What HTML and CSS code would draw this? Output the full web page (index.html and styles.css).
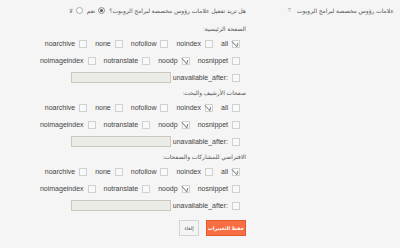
FILE: index.html
```html
<!DOCTYPE html>
<html lang="ar" dir="rtl">
<head>
    <meta charset="UTF-8">
    <title>علامات رؤوس مخصصة لبرامج الروبوت</title>
    <link rel="stylesheet" href="styles.css">
</head>
<body>
    <div class="settings">
        <div class="field-label">
            <span>علامات رؤوس مخصصة لبرامج الروبوت</span>
            <span class="help">?</span>
        </div>
        <div class="field-body">
            <div class="question">
                هل تريد تفعيل علامات رؤوس مخصصة لبرامج الروبوت؟
                <span class="radio on"></span> نعم
                <span class="radio"></span> لا
            </div>

            <div class="group">
                <div class="group-title">الصفحة الرئيسية:</div>
                <div class="row">
                    <label class="opt"><span class="box checked"><svg viewBox="0 0 10 10"><path d="M1 1.5 L6.5 7.5 L7.5 3.5"/></svg></span><span class="tag">all</span></label>
                    <label class="opt"><span class="box"></span><span class="tag">noindex</span></label>
                    <label class="opt"><span class="box"></span><span class="tag">nofollow</span></label>
                    <label class="opt"><span class="box"></span><span class="tag">none</span></label>
                    <label class="opt"><span class="box"></span><span class="tag">noarchive</span></label>
                </div>
                <div class="row">
                    <label class="opt"><span class="box"></span><span class="tag">nosnippet</span></label>
                    <label class="opt"><span class="box checked"><svg viewBox="0 0 10 10"><path d="M1 1.5 L6.5 7.5 L7.5 3.5"/></svg></span><span class="tag">noodp</span></label>
                    <label class="opt"><span class="box"></span><span class="tag">notranslate</span></label>
                    <label class="opt"><span class="box"></span><span class="tag">noimageindex</span></label>
                </div>
                <div class="row">
                    <label class="opt"><span class="box"></span><span class="tag">unavailable_after:</span></label>
                    <input type="text" class="date">
                </div>
            </div>

            <div class="group">
                <div class="group-title">صفحات الأرشيف والبحث:</div>
                <div class="row">
                    <label class="opt"><span class="box"></span><span class="tag">all</span></label>
                    <label class="opt"><span class="box checked"><svg viewBox="0 0 10 10"><path d="M1 1.5 L6.5 7.5 L7.5 3.5"/></svg></span><span class="tag">noindex</span></label>
                    <label class="opt"><span class="box"></span><span class="tag">nofollow</span></label>
                    <label class="opt"><span class="box"></span><span class="tag">none</span></label>
                    <label class="opt"><span class="box"></span><span class="tag">noarchive</span></label>
                </div>
                <div class="row">
                    <label class="opt"><span class="box"></span><span class="tag">nosnippet</span></label>
                    <label class="opt"><span class="box checked"><svg viewBox="0 0 10 10"><path d="M1 1.5 L6.5 7.5 L7.5 3.5"/></svg></span><span class="tag">noodp</span></label>
                    <label class="opt"><span class="box"></span><span class="tag">notranslate</span></label>
                    <label class="opt"><span class="box"></span><span class="tag">noimageindex</span></label>
                </div>
                <div class="row">
                    <label class="opt"><span class="box"></span><span class="tag">unavailable_after:</span></label>
                    <input type="text" class="date">
                </div>
            </div>

            <div class="group">
                <div class="group-title">الافتراضي للمشاركات والصفحات:</div>
                <div class="row">
                    <label class="opt"><span class="box checked"><svg viewBox="0 0 10 10"><path d="M1 1.5 L6.5 7.5 L7.5 3.5"/></svg></span><span class="tag">all</span></label>
                    <label class="opt"><span class="box"></span><span class="tag">noindex</span></label>
                    <label class="opt"><span class="box"></span><span class="tag">nofollow</span></label>
                    <label class="opt"><span class="box"></span><span class="tag">none</span></label>
                    <label class="opt"><span class="box"></span><span class="tag">noarchive</span></label>
                </div>
                <div class="row">
                    <label class="opt"><span class="box"></span><span class="tag">nosnippet</span></label>
                    <label class="opt"><span class="box checked"><svg viewBox="0 0 10 10"><path d="M1 1.5 L6.5 7.5 L7.5 3.5"/></svg></span><span class="tag">noodp</span></label>
                    <label class="opt"><span class="box"></span><span class="tag">notranslate</span></label>
                    <label class="opt"><span class="box"></span><span class="tag">noimageindex</span></label>
                </div>
                <div class="row">
                    <label class="opt"><span class="box"></span><span class="tag">unavailable_after:</span></label>
                    <input type="text" class="date">
                </div>
            </div>

            <div class="actions">
                <button class="save">حفظ التغييرات</button>
                <button class="cancel">إلغاء</button>
            </div>
        </div>
    </div>
</body>
</html>
```

FILE: styles.css
```css
* {
    margin: 0;
    padding: 0;
    box-sizing: border-box;
}

body {
    background: #f5f5f5;
    font-family: "Liberation Sans", "DejaVu Sans", sans-serif;
    font-size: 7px;
    color: #444;
}

.settings {
    display: flex;
    align-items: flex-start;
    padding-top: 3px;
}

.field-label {
    width: 150px;
    padding-right: 6px;
    display: flex;
    gap: 6px;
    height: 14px;
    align-items: center;
    color: #555;
    font-size: 6px;
}

.help {
    color: #999;
}

.field-body {
    width: 200px;
    padding-right: 4px;
}

.question {
    height: 14px;
    display: flex;
    align-items: center;
    gap: 3px;
    color: #555;
    font-size: 6px;
    margin-bottom: 6px;
}

.radio {
    width: 7px;
    height: 7px;
    border-radius: 50%;
    border: 1px solid #aaa;
    background: #fff;
    margin-right: 1px;
}

.radio.on {
    background: #555;
    box-shadow: inset 0 0 0 1px #fff;
}

.group {
    margin-bottom: 1px;
}

.group-title {
    height: 12px;
    line-height: 12px;
    font-size: 6px;
    color: #555;
}

.row {
    height: 17px;
    display: flex;
    align-items: center;
    gap: 8px;
    padding-right: 6px;
}

.opt {
    display: flex;
    align-items: center;
    gap: 4px;
    flex-shrink: 0;
}

.box {
    display: block;
    width: 8px;
    height: 8px;
    flex-shrink: 0;
    border: 1px solid #d0d0d0;
    background: #f9f9f9;
    position: relative;
}

.box svg {
    position: absolute;
    top: -1px;
    right: -1px;
    width: 9px;
    height: 9px;
    overflow: visible;
}

.box svg path {
    fill: none;
    stroke: #555;
    stroke-width: 0.9;
}

.tag {
    direction: ltr;
    unicode-bidi: isolate;
}

.date {
    width: 100px;
    height: 11px;
    border: 1px solid #c8c8c0;
    background: #ecece6;
    margin-right: -6px;
}

.actions {
    display: flex;
    gap: 7px;
    margin-top: 6px;
}

button {
    height: 16px;
    font-family: "Liberation Sans", "DejaVu Sans", sans-serif;
    font-size: 5px;
    cursor: pointer;
}

.save {
    width: 40px;
    background: #f96f43;
    border: 1px solid #e25a2e;
    color: #fff;
    font-weight: bold;
}

.cancel {
    width: 20px;
    background: #f4f4f4;
    border: 1px solid #d4d4d4;
    color: #444;
}
```
